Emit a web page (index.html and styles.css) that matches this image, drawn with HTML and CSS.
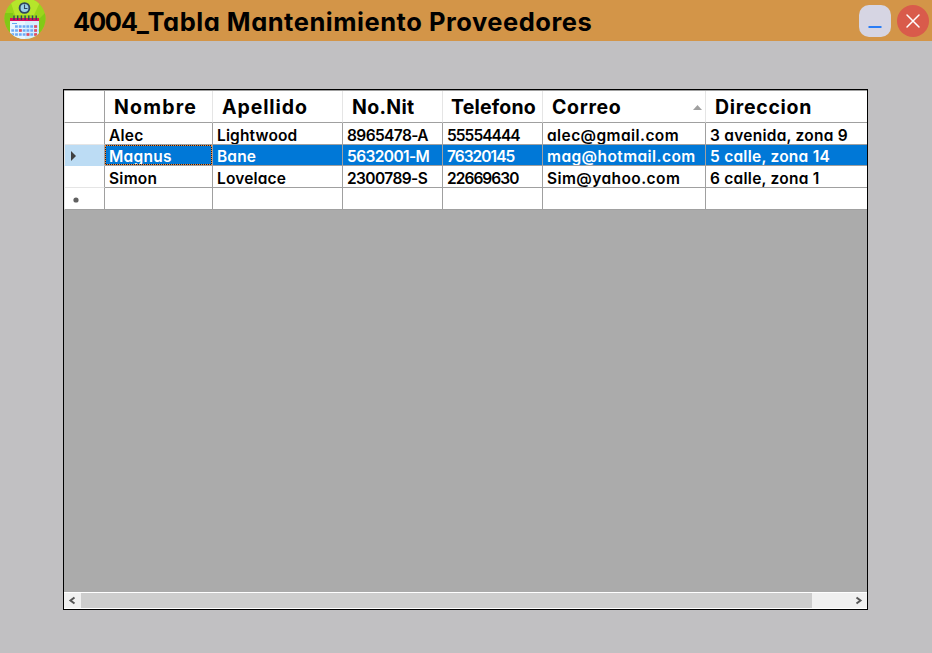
FILE: index.html
```html
<!DOCTYPE html>
<html lang="es">
<head>
<meta charset="utf-8">
<title>4004_Tabla Mantenimiento Proveedores</title>
<link rel="stylesheet" href="styles.css">
</head>
<body>
<header class="titlebar">
  <svg class="logo" width="42" height="40" viewBox="0 0 42 40">
    <defs><clipPath id="disc"><circle cx="21" cy="18.5" r="20.5"/></clipPath></defs>
    <g clip-path="url(#disc)">
      <path fill="#9bd51c" d="M0 0h42v40H0z"/>
      <path fill="#b6e52b" d="M6 0h31l-7 15H11z"/>
      <path fill="#82c916" d="M0 13h9v27H0zM34 20l8-8v28h-9z"/>
      <path fill="#d7effd" d="M6 21h29v19H6z"/>
      <path fill="#e9f6fe" d="M6 21h15v19H6z"/>
      <path fill="#d90e5c" d="M6 18h29v3H6z"/>
      <path stroke="#29465e" stroke-width="1.4" d="M10 15.500v4.500m3.700-4.500v4.500m3.700-4.500v4.500m3.700-4.500v4.500m3.700-4.500v4.500m3.700-4.500v4.500m3.700-4.500v4.500"/>
      <path stroke="#62a8f2" stroke-width="1" d="M8 23.500h5"/>
      <path stroke="#6caaf5" stroke-width="2.400" stroke-dasharray="2.800 1" d="M11 26.500h23M7.300 30.500h27M7.300 34.500h27"/>
      <path stroke="#f04a58" stroke-width="2.400" d="M30.200 26.500h2.800M15 30.500h2.800M30.200 30.500h2.800M22.600 34.500h2.800M30.200 34.500h2.800"/>
    </g>
    <circle cx="20.500" cy="8" r="4.900" fill="#9bd0e8" stroke="#30475f" stroke-width="1.900"/>
    <path stroke="#30475f" stroke-width="1.100" fill="none" d="M20.500 4.500v4h3"/>
  </svg>
  <h1 class="title"><span class="code">4004_</span>Tabla Mantenimiento Proveedores</h1>
  <button class="btn minimize" aria-label="Minimizar"><svg width="32" height="32"><path d="M9.500 22h13" stroke="#2a7df5" stroke-width="2"/></svg></button>
  <button class="btn close" aria-label="Cerrar"><svg width="32" height="32"><path d="M10 10l12 12M22 10L10 22" stroke="#fff" stroke-width="1.500" stroke-linecap="round"/></svg></button>
</header>
<main class="frame">
  <div class="grid">
    <div class="row head">
      <div class="mark"></div><div class="name">Nombre</div><div class="surname">Apellido</div><div class="nit">No.Nit</div><div class="phone">Telefono</div><div class="mail">Correo<svg class="sort" width="9" height="5"><path d="M0 5l4.500-5L9 5z" fill="#a0a0a0"/></svg></div><div class="address">Direccion</div>
    </div>
    <div class="row">
      <div class="mark"></div><div class="name">Alec</div><div class="surname">Lightwood</div><div class="nit">8965478-A</div><div class="phone">55554444</div><div class="mail">alec@gmail.com</div><div class="address">3 avenida, zona 9</div>
    </div>
    <div class="row selected">
      <div class="mark"><svg width="5" height="10"><path d="M0 0l5 5-5 5z" fill="#404040"/></svg></div><div class="name current">Magnus</div><div class="surname">Bane</div><div class="nit">5632001-M</div><div class="phone">76320145</div><div class="mail">mag@hotmail.com</div><div class="address">5 calle, zona 14</div>
    </div>
    <div class="row">
      <div class="mark"></div><div class="name">Simon</div><div class="surname">Lovelace</div><div class="nit">2300789-S</div><div class="phone">22669630</div><div class="mail">Sim@yahoo.com</div><div class="address">6 calle, zona 1</div>
    </div>
    <div class="row">
      <div class="mark fresh"><svg width="6" height="6"><circle cx="3" cy="3" r="2.600" fill="#606060"/></svg></div><div></div><div></div><div></div><div></div><div></div><div></div>
    </div>
  </div>
  <div class="scrollbar">
    <svg class="arrow" width="17" height="15"><path d="M10.500 4.500L6.500 7.500l4 3" fill="none" stroke="#555" stroke-width="2"/></svg>
    <div class="thumb"></div>
    <svg class="arrow" width="17" height="15"><path d="M6.500 4.500l4 3-4 3" fill="none" stroke="#555" stroke-width="2"/></svg>
  </div>
</main>
</body>
</html>
```
FILE: styles.css
```css
* { box-sizing: border-box; }
body {
  margin: 0;
  height: 653px;
  overflow: hidden;
  background: #c1c0c2;
  color: #000;
  font-family: Inter, "Liberation Sans", sans-serif;
  font-feature-settings: "cv11";
}
.titlebar {
  display: flex;
  height: 41px;
  padding: 0 3px 0 4px;
  background: #d39548;
}
.logo { flex: none; }
.title {
  flex: 1;
  margin: 0 0 0 27px;
  font-size: 25.5px;
  font-weight: 700;
  letter-spacing: 0.52px;
  line-height: 43px;
  white-space: nowrap;
}
.code { letter-spacing: -1.3px; }
.btn {
  width: 32px;
  height: 32px;
  margin: 5px 0 0 6px;
  padding: 0;
  border: 0;
}
.btn svg { display: block; }
.minimize { border-radius: 10px; background: #d6d5e3; }
.close { border-radius: 50%; background: #d95b4b; }
.frame {
  display: flex;
  flex-direction: column;
  justify-content: space-between;
  width: 805px;
  height: 521px;
  margin: 48px 0 0 63px;
  border: 1px solid #000;
  background: #ababab;
}
.grid {
  padding-top: 1px;
  background: linear-gradient(#a0a0a0 1px, #fff 1px);
}
.row {
  display: grid;
  grid-template-columns: 41px 108px 130px 100px 100px 163px 1fr;
  height: 22px;
  font-size: 15.5px;
  font-weight: 600;
  line-height: 25px;
  white-space: nowrap;
}
.row > div {
  padding-left: 4px;
  border-right: 1px solid #a0a0a0;
  border-bottom: 1px solid #a0a0a0;
  overflow: hidden;
}
.row > div:last-child { border-right: 0; }
.row > .mark {
  padding: 0;
  border-bottom-color: #e5e5e5;
  border-left: 1px solid #e5e5e5;
}
.name { letter-spacing: 0.25px; }
.surname { letter-spacing: 0.15px; }
.nit { letter-spacing: -0.6px; }
.phone { letter-spacing: -0.95px; }
.mail { letter-spacing: 0.42px; }
.address { letter-spacing: 0.25px; }

.row.head {
  height: 32px;
  font-size: 19.5px;
  font-weight: 700;
  line-height: 33px;
}
.row.head > div { padding-left: 9px; border-right-color: #e5e5e5; }
.row.head > .mark { border-right-color: #a0a0a0; border-bottom-color: #a0a0a0; }
.head > .name { letter-spacing: 1.2px; }
.head > .surname { letter-spacing: 0.9px; }
.head > .nit { letter-spacing: 0.3px; }
.row.head > .phone { padding-left: 8px; letter-spacing: 0.2px; }
.head > .mail { letter-spacing: 0.65px; }
.head > .address { letter-spacing: 0.7px; }
.row.head > .mail {
  display: flex;
  align-items: flex-start;
  justify-content: space-between;
  padding-right: 3px;
}
.sort { margin-top: 14px; }

.row.selected { height: 21px; color: #fff; background: #0078d7; line-height: 23px; }
.row.selected > .mark { background: #bcdcf4; border-bottom-color: #bcdcf4; }
.row.selected svg { display: block; margin: 6px 0 0 6px; }
.row.selected > .current { position: relative; }
.current::before,
.current::after {
  content: "";
  position: absolute;
  inset: 0;
  border: 1px solid #0f2238;
}
.current::after { border: 1px dotted #ff8728; }
.row > .fresh { border-bottom-color: #a0a0a0; }
.fresh svg { display: block; margin: 9px 0 0 8px; }
.scrollbar {
  display: flex;
  height: 17px;
  border-top: 1px solid #fff;
  border-bottom: 1px solid #fff;
  background: #f0f0f0;
}
.arrow { flex: none; }
.thumb { width: 731px; margin-right: auto; background: #cdcdcd; }
```
